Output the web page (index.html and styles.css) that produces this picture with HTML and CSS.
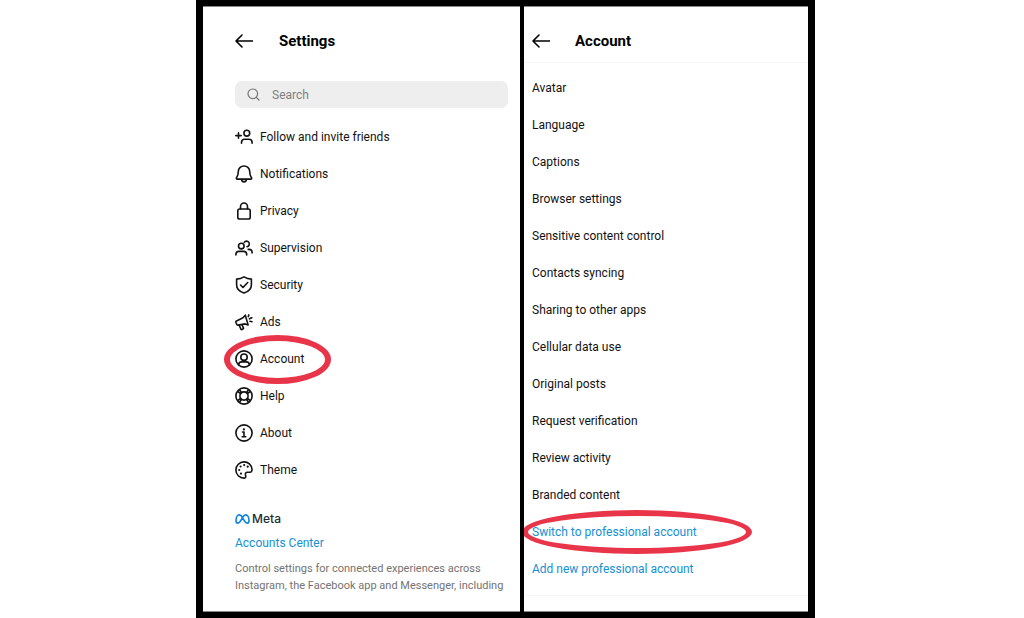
FILE: index.html
```html
<!DOCTYPE html>
<html lang="en">
<head>
  <meta charset="utf-8">
  <title>Settings - Account</title>
  <link rel="stylesheet" href="styles.css">
</head>
<body>
  <main class="frame">
    <section class="panel settings">
      <header class="bar">
        <button class="back" type="button" aria-label="Back">
          <svg width="18" height="14" viewBox="0 0 18 14"><path d="M17.5 7H1M7 1L1 7l6 6"/></svg>
        </button>
        <h1>Settings</h1>
      </header>
      <label class="search">
        <svg width="13" height="13" viewBox="0 0 13 13"><circle cx="5.8" cy="5.8" r="4.8"/><path d="M9.3 9.3l2.7 2.7"/></svg>
        <input type="search" placeholder="Search" aria-label="Search">
      </label>
      <ul class="menu">
        <li><a href="#follow">
          <svg class="icon" viewBox="0 0 18 18"><path d="M.8 7.6h5.400M3.500 4.900v5.400"/><circle cx="11.800" cy="5.200" r="2.900"/><path d="M6.500 15.200v-.8c0-2 1.300-3.200 3.200-3.200h4.200c1.900 0 3.200 1.200 3.200 3.200v.8"/></svg>
          Follow and invite friends</a></li>
        <li><a href="#notifications">
          <svg class="icon" viewBox="0 0 18 18"><path d="M9 1C5.700 1 3.300 3.400 3.300 6.500c0 3.600-.7 4.600-1.700 6-.5.8-.2 1.600.7 1.600h13.400c.9 0 1.200-.8.7-1.600-1-1.400-1.700-2.400-1.700-6C14.700 3.400 12.300 1 9 1z"/><path d="M6.500 14.500c.3 1.500 1.200 2.400 2.500 2.400s2.200-.9 2.500-2.400"/></svg>
          Notifications</a></li>
        <li><a href="#privacy">
          <svg class="icon" viewBox="0 0 18 18"><rect x="2.800" y="7" width="12.400" height="10" rx="1.800"/><path d="M5.500 7V4.500a3.500 3.500 0 0 1 7 0V7"/></svg>
          Privacy</a></li>
        <li><a href="#supervision">
          <svg class="icon" viewBox="0 0 18 18"><circle cx="6.300" cy="7.100" r="2.800"/><path d="M.9 16v-.6c0-1.900 1.300-3 3.100-3h4.600c1.800 0 3.100 1.100 3.100 3v.6M9.200 3.400A2.800 2.800 0 1 1 12 7.700M13.200 10.400h.8c1.800 0 3.100 1.100 3.100 3v.6"/></svg>
          Supervision</a></li>
        <li><a href="#security">
          <svg class="icon" viewBox="0 0 18 18"><path d="M9 .9c2.300 1.400 4.700 2.100 7.400 2.200v5.700c0 4-2.800 6.900-7.400 8.300-4.600-1.400-7.400-4.300-7.400-8.300V3.100C4.300 3 6.700 2.300 9 .9z"/><path d="M5.500 9l2.500 2.500L12.700 6.500"/></svg>
          Security</a></li>
        <li><a href="#ads">
          <svg class="icon" viewBox="0 0 18 18"><path d="M10.300 2.200l2.800 9.700-3-1-7.100 1.200c-.6.1-1-.1-1.200-.6L.9 9.200c-.2-.6.1-1 .6-1.200L8 4.800zM4.200 12.200l1.700 3.900c.2.5.7.6 1.100.4l1-.5c.5-.2.6-.6.4-1.100l-1.500-3.300M13.300 3.600l.5-1.700M14.500 5.800l2.300-1.100M15 8.300l2 .4"/></svg>
          Ads</a></li>
        <li class="marked"><a href="#account">
          <svg class="icon" viewBox="0 0 18 18"><circle cx="9" cy="9" r="8.100"/><circle cx="9" cy="7.200" r="3.200"/><path d="M3.700 15v-.4c0-1.800 1.300-2.700 3-2.700h4.600c1.700 0 3 .9 3 2.700v.4"/></svg>
          Account</a></li>
        <li><a href="#help">
          <svg class="icon" viewBox="0 0 18 18"><circle cx="9" cy="9" r="8.100"/><circle cx="9" cy="9" r="4.100"/><path d="M2.700 4.500l3 2.200M4.500 2.700l2.200 3M15.300 4.500l-3 2.200M13.500 2.700l-2.200 3M2.700 13.500l3-2.200M4.500 15.300l2.200-3M15.300 13.500l-3-2.200M13.500 15.300l-2.200-3"/></svg>
          Help</a></li>
        <li><a href="#about">
          <svg class="icon" viewBox="0 0 18 18"><circle cx="9" cy="9" r="8.100"/><path d="M7.500 8H9v4.600M7.200 12.700h3.600"/><circle class="dot" cx="8.900" cy="5.400" r="1.100"/></svg>
          About</a></li>
        <li><a href="#theme">
          <svg class="icon" viewBox="0 0 18 18"><path d="M17 8.300C16.600 3.900 13.200.9 9 .9A8.100 8.100 0 0 0 .9 9c0 4.500 3.600 8.100 8.100 8.100 1.300 0 2-.9 1.700-2.100l-.3-1.300c-.3-1.500.5-2.400 2-2.400h2.300c1.600 0 2.400-1.200 2.300-3z"/><g class="dot"><circle cx="4.200" cy="9" r="1.100"/><circle cx="5.600" cy="5.500" r="1.100"/><circle cx="9.200" cy="4.100" r="1.100"/><circle cx="12.700" cy="5.700" r="1.100"/><circle cx="6" cy="12.600" r="1.100"/></g></svg>
          Theme</a></li>
      </ul>
      <footer class="meta">
        <div class="brand">
          <svg width="15" height="10" viewBox="0 0 15 10"><path d="M7.500 3.600C6.500 1.900 5.500.9 4.300.9 2.300.9 1 3.600 1 6.400c0 1.700.7 2.700 1.900 2.700 1.500 0 2.400-1.300 4.600-5.500C8.500 1.900 9.500.9 10.700.9c2 0 3.300 2.700 3.300 5.500 0 1.700-.7 2.700-1.900 2.700-1.500 0-2.400-1.300-4.600-5.500z"/></svg>
          Meta
        </div>
        <a class="center" href="#accounts-center">Accounts Center</a>
        <p>Control settings for connected experiences across Instagram, the Facebook app and Messenger, including</p>
      </footer>
    </section>

    <section class="panel account">
      <header class="bar">
        <button class="back" type="button" aria-label="Back">
          <svg width="18" height="14" viewBox="0 0 18 14"><path d="M17.5 7H1M7 1L1 7l6 6"/></svg>
        </button>
        <h1>Account</h1>
      </header>
      <ul class="menu">
        <li><a href="#avatar">Avatar</a></li>
        <li><a href="#language">Language</a></li>
        <li><a href="#captions">Captions</a></li>
        <li><a href="#browser">Browser settings</a></li>
        <li><a href="#sensitive">Sensitive content control</a></li>
        <li><a href="#contacts">Contacts syncing</a></li>
        <li><a href="#sharing">Sharing to other apps</a></li>
        <li><a href="#cellular">Cellular data use</a></li>
        <li><a href="#posts">Original posts</a></li>
        <li><a href="#verification">Request verification</a></li>
        <li><a href="#activity">Review activity</a></li>
        <li><a href="#branded">Branded content</a></li>
        <li class="blue marked"><a href="#switch">Switch to professional account</a></li>
        <li class="blue"><a href="#add">Add new professional account</a></li>
      </ul>
    </section>
  </main>
</body>
</html>
```
FILE: styles.css
```css
*, *::after { box-sizing: border-box; }

body {
  margin: 0;
  background: #fff;
  color: #121212;
  font-family: Roboto, "Liberation Sans", sans-serif;
  font-size: 12px;
}

a { color: inherit; text-decoration: none; }

svg {
  flex: none;
  fill: none;
  stroke: currentColor;
  stroke-width: 1.6;
  stroke-linecap: round;
  stroke-linejoin: round;
}

.frame {
  display: grid;
  grid-template-columns: 317fr 284fr;
  gap: 4px;
  min-height: 100vh;
  margin: 0 209px 0 196px;
  padding: 6px 7px;
  background: #000;
}

.panel {
  min-width: 0;
  overflow: hidden;
  background: #fff;
  border: solid #888;
  border-width: 1px 0;
}

/* header */
.bar {
  display: flex;
  align-items: center;
  height: 56px;
}
.bar h1 {
  margin: 0;
  font-size: 15px;
  font-weight: 700;
  line-height: 20px;
  color: #000;
}
.back {
  display: flex;
  margin: 0;
  padding: 0;
  border: 0;
  background: none;
  color: #000;
}

/* lists */
.menu {
  margin: 0;
  padding: 0;
  list-style: none;
}
.menu li { position: relative; }
.menu a {
  display: flex;
  align-items: center;
  gap: 7px;
  height: 37px;
}
.icon { width: 18px; height: 18px; }
.dot { fill: currentColor; stroke: none; }
.blue { color: #1590d4; }

/* red rings round the steps to tap */
.marked::after {
  content: "";
  position: absolute;
  border: 6px solid #e9354a;
  border-radius: 50%;
  pointer-events: none;
}

/* left screen */
.settings { padding: 6px 12px 16px 32px; }
.settings .bar { gap: 26px; }
.settings .marked::after {
  top: -5px;
  left: -11px;
  width: 107px;
  height: 49px;
}

.search {
  display: flex;
  align-items: center;
  gap: 12px;
  height: 27px;
  margin: 12px 0 10px;
  padding: 0 12px;
  border-radius: 7px;
  background: #eee;
  color: #777;
}
.search svg { stroke-width: 1.2; }
.search input {
  flex: 1;
  min-width: 0;
  padding: 0;
  border: 0;
  outline: 0;
  background: none;
  font: inherit;
}
.search input::placeholder { color: #808080; }

.meta { padding-top: 22px; }
.brand {
  display: flex;
  align-items: center;
  gap: 2px;
  height: 18px;
  color: #1c2b33;
  font: 500 12px/18px Inter, sans-serif;
}
.brand svg { color: #0a84e0; }
.center {
  display: block;
  margin-top: 6px;
  line-height: 18px;
  color: #1590d4;
}
.meta p {
  margin: 8px 0 0;
  font-size: 11px;
  line-height: 17px;
  color: #737373;
}

/* right screen */
.account .bar {
  gap: 25px;
  padding: 12px 8px 0;
  border-bottom: 1px solid #f5f5f5;
}
.account .menu {
  padding: 6px 8px 8px;
  border-bottom: 1px solid #f5f5f5;
}
.account .marked::after {
  top: -3px;
  left: -10px;
  width: 230px;
  height: 44px;
}
```
